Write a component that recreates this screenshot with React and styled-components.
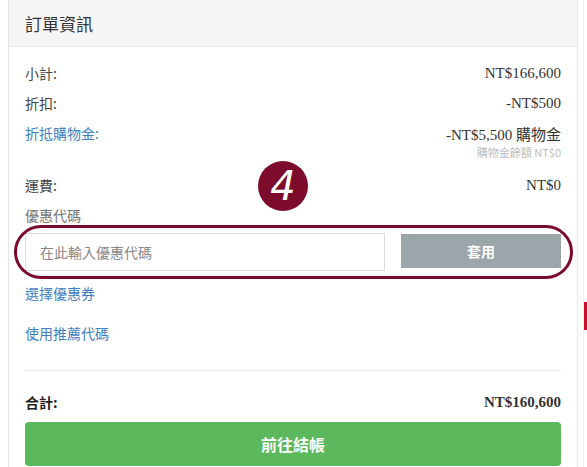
import React from 'react'
import styled, { createGlobalStyle } from 'styled-components'

const GlobalStyle = createGlobalStyle`
  html, body {
    margin: 0;
    padding: 0;
    background: #fff;
  }
  body {
    font-family: "Noto Sans CJK TC", "Noto Sans", sans-serif;
    color: #333;
  }
`

const Page = styled.div`
  display: flex;
  align-items: flex-start;
  padding-left: 8px;
  width: 587px;
  height: 467px;
  overflow: hidden;
  box-sizing: border-box;
`

const Card = styled.section`
  width: 570px;
  flex: none;
  border: 1px solid #e6e6e6;
  border-top: none;
  box-sizing: border-box;
  height: 480px;
`

const Header = styled.div`
  height: 47px;
  line-height: 47px;
  background: #f5f5f5;
  border-bottom: 1px solid #e9e9e9;
  padding: 0 16px;
  font-size: 17px;
  color: #333;
  box-sizing: border-box;
`

const Body = styled.div`
  padding: 11px 16px 0;
`

const Row = styled.div`
  display: flex;
  justify-content: space-between;
  align-items: center;
  height: 30px;
  margin-top: ${(p) => p.$mt || 0}px;
  font-size: 14px;
  font-weight: ${(p) => (p.$bold ? 700 : 400)};
  color: ${(p) => (p.$bold ? '#222' : '#444')};
`

const Label = styled.span`
  color: ${(p) => (p.$link ? '#3f7fbf' : 'inherit')};
`

const Amount = styled.span`
  font-family: "Liberation Serif", "Noto Sans CJK TC", serif;
  font-size: 15px;
  color: #333;
  font-weight: inherit;
`

const Note = styled.div`
  text-align: right;
  font-size: 11px;
  line-height: 14px;
  margin-top: -3px;
  color: #bdbdbd;
`

const FieldLabel = styled.div`
  margin-top: 5px;
  font-size: 14px;
  line-height: 20px;
  color: #777;
`

const CouponRow = styled.div`
  position: relative;
  display: flex;
  align-items: flex-start;
  gap: 16px;
  margin-top: 8px;
`

const Highlight = styled.div`
  position: absolute;
  left: -11px;
  right: -12px;
  top: -8px;
  bottom: -8px;
  border: 3px solid #7a0a2b;
  border-radius: 27px;
  pointer-events: none;
`

const Badge = styled.div`
  position: absolute;
  left: 233px;
  top: -72px;
  width: 50px;
  height: 50px;
  border-radius: 50%;
  background: #7d0b2b;
  color: #fff;
  display: flex;
  align-items: center;
  justify-content: center;
  font-family: "DejaVu Sans", sans-serif;
  font-style: italic;
  font-weight: 200;
  font-size: 40px;
  line-height: 1;
`

const Input = styled.input`
  width: 360px;
  height: 38px;
  box-sizing: border-box;
  border: 1px solid #dcdcdc;
  padding: 0 14px;
  font-family: inherit;
  font-size: 14px;
  color: #333;
  outline: none;
  &::placeholder {
    color: #888;
  }
`

const ApplyButton = styled.button`
  flex: 1;
  height: 34px;
  margin-top: 1px;
  border: none;
  background: #9ba5aa;
  color: #fff;
  font-family: inherit;
  font-size: 14px;
  font-weight: 700;
`

const LinkText = styled.div`
  margin-top: ${(p) => p.$mt}px;
  font-size: 14px;
  line-height: 20px;
  color: #3f7fbf;
`

const Divider = styled.hr`
  margin: 27px 0 0;
  border: none;
  border-top: 1px solid #eaeaea;
`

const CheckoutButton = styled.button`
  display: block;
  width: 100%;
  height: 44px;
  margin-top: 5px;
  border: none;
  border-radius: 4px;
  background: #5cb85c;
  color: #fff;
  font-family: inherit;
  font-size: 16px;
  font-weight: 700;
`

const Side = styled.div`
  margin-left: 5px;
  width: 4px;
  height: 467px;
  border-left: 1px solid #f0f0f0;
  padding-top: 302px;
  box-sizing: border-box;
`

const SideMark = styled.div`
  width: 3px;
  height: 28px;
  background: #c8102e;
`

export default function App() {
  return (
    <>
      <GlobalStyle />
      <Page>
        <Card>
          <Header>訂單資訊</Header>
          <Body>
            <Row>
              <Label>小計:</Label>
              <Amount>NT$166,600</Amount>
            </Row>
            <Row>
              <Label>折扣:</Label>
              <Amount>-NT$500</Amount>
            </Row>
            <Row>
              <Label $link>折抵購物金:</Label>
              <Amount>-NT$5,500 購物金</Amount>
            </Row>
            <Note>購物金餘額 NT$0</Note>
            <Row $mt={11}>
              <Label>運費:</Label>
              <Amount>NT$0</Amount>
            </Row>
            <FieldLabel>優惠代碼</FieldLabel>
            <CouponRow>
              <Input placeholder="在此輸入優惠代碼" />
              <ApplyButton>套用</ApplyButton>
              <Highlight />
              <Badge>4</Badge>
            </CouponRow>
            <LinkText $mt={12}>選擇優惠券</LinkText>
            <LinkText $mt={20}>使用推薦代碼</LinkText>
            <Divider />
            <Row $mt={16} $bold>
              <Label>合計:</Label>
              <Amount>NT$160,600</Amount>
            </Row>
            <CheckoutButton>前往結帳</CheckoutButton>
          </Body>
        </Card>
        <Side>
          <SideMark />
        </Side>
      </Page>
    </>
  )
}
